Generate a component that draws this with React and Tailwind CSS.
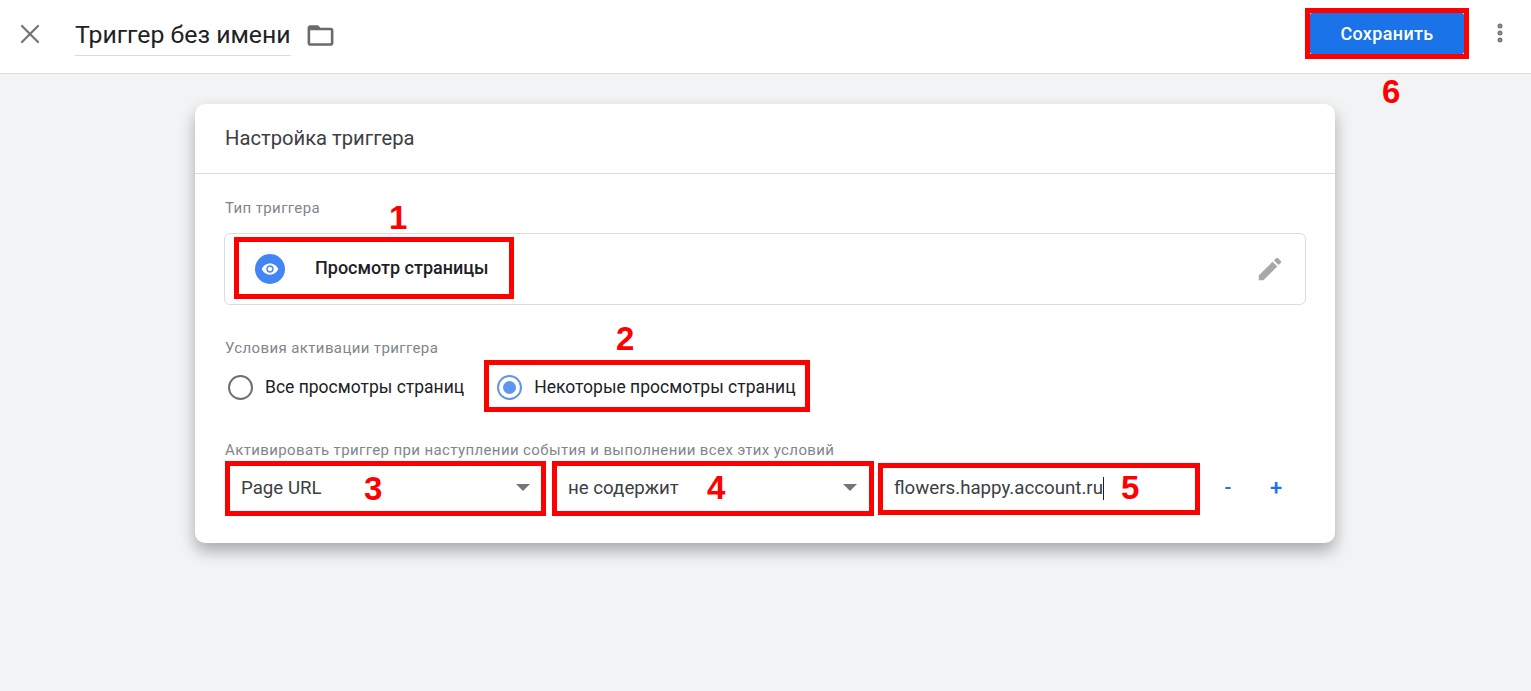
import { MoreVertical, X } from "lucide-react";

const RedBox = ({ className }) => (
  <div className={`absolute border-[5px] border-[#ff0000] pointer-events-none ${className}`} />
);

const Num = ({ className, children }) => (
  <div className={`absolute text-[33px] font-bold leading-none text-[#ff0000] font-['Liberation_Sans',sans-serif] ${className}`}>
    {children}
  </div>
);

const Label = ({ children, className = "" }) => (
  <div className={`text-[15px] leading-[20px] tracking-[0.38px] text-[#80868b] ${className}`}>{children}</div>
);

const Radio = ({ checked, children }) => (
  <div className="flex items-center gap-[12px]">
    <div className={`w-[25px] h-[25px] rounded-full border-2 flex items-center justify-center ${checked ? "border-[#5f94f2]" : "border-[#6f6f6f]"}`}>
      {checked && <div className="w-[13px] h-[13px] rounded-full bg-[#5f94f2]" />}
    </div>
    <span className="text-[17.5px] text-[#202124]">{children}</span>
  </div>
);

const Select = ({ children, className }) => (
  <div className={`flex items-center justify-between h-[44px] ${className}`}>
    <span className="mt-[3px] text-[18.7px] text-[#3c4043]">{children}</span>
    <div className="w-0 h-0 border-x-[7px] border-x-transparent border-t-[7px] border-t-[#757575]" />
  </div>
);

const App = () => {
  return (
    <div className="relative w-[1531px] h-[691px] overflow-hidden bg-[#f1f3f4] font-['Roboto',sans-serif]">
      <header className="h-[74px] bg-white border-b border-[#dadce0] flex items-center pl-[14px] pr-[19px]">
        <X size={32} strokeWidth={1.7} className="text-[#757575] -mt-[5px]" />
        <div className="ml-[29px] h-[39px] border-b border-[#dadce0] text-[24.8px] leading-[36px] text-[#202124]">
          Триггер без имени
        </div>
        <svg width="31" height="31" viewBox="0 0 24 24" className="ml-[14px] -mt-[3px]" fill="#6a6a6a">
          <path d="M20 6h-8l-2-2H4c-1.1 0-1.99.9-1.99 2L2 18c0 1.1.9 2 2 2h16c1.1 0 2-.9 2-2V8c0-1.1-.9-2-2-2zm0 12H4V8h16v10z" />
        </svg>
        <div className="ml-auto flex items-center gap-[24px]">
          <button className="w-[154px] h-[41px] -mt-[6px] rounded-[2px] bg-[#1a73e8] text-white text-[18px] tracking-[0.35px] font-medium">
            Сохранить
          </button>
          <MoreVertical size={24} strokeWidth={3} className="text-[#757575] -mt-[8px]" />
        </div>
      </header>

      <div className="w-[1140px] h-[439px] ml-[195px] mt-[30px] bg-white rounded-[10px] shadow-[0_8px_16px_rgba(0,0,0,0.3)]">
        <div className="h-[70px] border-b border-[#dadce0] pl-[30px] pt-[21px] text-[20.2px] leading-[26px] text-[#3c4043]">
          Настройка триггера
        </div>
        <div className="pl-[29px] pr-[29px] pt-[24px]">
          <Label className="pl-[1px]">Тип триггера</Label>
          <div className="mt-[15px] h-[72px] border border-[#dadce0] rounded-[6px] flex items-center pl-[30px] pr-[20px]">
            <div className="w-[30px] h-[30px] rounded-full bg-[#4285f4] flex items-center justify-center">
              <svg width="18" height="18" viewBox="0 0 24 24" fill="#ffffff">
                <path d="M12 4.5C7 4.5 2.7 7.6 1 12c1.7 4.4 6 7.5 11 7.5s9.3-3.1 11-7.5c-1.7-4.4-6-7.5-11-7.5zM12 17c-2.8 0-5-2.2-5-5s2.2-5 5-5 5 2.200 5 5-2.200 5-5 5zm0-8c-1.700 0-3 1.300-3 3s1.300 3 3 3 3-1.300 3-3-1.300-3-3-3z" />
              </svg>
            </div>
            <span className="ml-[30px] -mt-[3px] text-[18px] font-medium text-[#202124]">Просмотр страницы</span>
            <svg width="30" height="30" viewBox="0 0 24 24" fill="#a8a8a8" className="ml-auto">
              <path d="M3 17.250V21h3.750L17.810 9.940l-3.750-3.750L3 17.250zM20.710 7.040a1 1 0 0 0 0-1.410l-2.340-2.340a1 1 0 0 0-1.410 0l-1.830 1.830 3.750 3.750 1.830-1.830z" />
            </svg>
          </div>

          <Label className="pl-[1px] mt-[33px]">Условия активации триггера</Label>
          <div className="mt-[12px] h-[34px] flex items-center gap-[33px] pl-[4px]">
            <Radio>Все просмотры страниц</Radio>
            <Radio checked>Некоторые просмотры страниц</Radio>
          </div>

          <Label className="pl-[1px] mt-[36px]">
            Активировать триггер при наступлении события и выполнении всех этих условий
          </Label>
          <div className="mt-[5px] flex items-center">
            <Select className="w-[306px] pl-[17px]">Page URL</Select>
            <Select className="w-[327px] pl-[38px]">не содержит</Select>
            <div className="ml-[37px] w-[320px] text-[18.7px] text-[#3c4043] flex items-center h-[44px]">
              <span className="mt-[3px]">flowers.happy.account.ru</span>
              <span className="w-[1px] h-[23px] mt-[3px] bg-[#202124]" />
            </div>
            <span className="ml-[5px] w-[18px] text-center text-[20px] font-medium text-[#1a73e8]">-</span>
            <span className="ml-[30px] w-[18px] text-center text-[22px] font-medium text-[#1a73e8]">+</span>
          </div>
        </div>
      </div>

      <RedBox className="left-[1305px] top-[8px] w-[164px] h-[51px]" />
      <RedBox className="left-[234px] top-[237px] w-[280px] h-[62px]" />
      <RedBox className="left-[484px] top-[360px] w-[326px] h-[52px]" />
      <RedBox className="left-[225px] top-[461px] w-[321px] h-[55px]" />
      <RedBox className="left-[552px] top-[461px] w-[322px] h-[55px]" />
      <RedBox className="left-[878px] top-[463px] w-[322px] h-[52px]" />

      <Num className="left-[1382px] top-[75px]">6</Num>
      <Num className="left-[389px] top-[201px]">1</Num>
      <Num className="left-[616px] top-[322px]">2</Num>
      <Num className="left-[364px] top-[472px]">3</Num>
      <Num className="left-[707px] top-[471px]">4</Num>
      <Num className="left-[1121px] top-[471px]">5</Num>
    </div>
  );
};

export default App;
